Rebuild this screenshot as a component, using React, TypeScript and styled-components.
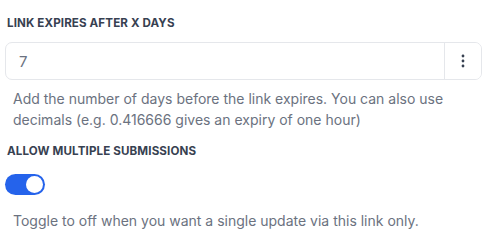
import React, { useState } from 'react'
import styled, { createGlobalStyle } from 'styled-components'

const GlobalStyle = createGlobalStyle`
    body {
        margin: 0;
        background: #ffffff;
        font-family: "Inter", "Noto Sans", sans-serif;
    }
`

const Panel = styled.div`
    width: 477px;
    padding: 15px 0 0 5px;
`

const Label = styled.h3`
    margin: 0 0 0 2px;
    font-size: 11.6px;
    line-height: 16px;
    font-weight: 700;
    letter-spacing: 0.01em;
    text-transform: uppercase;
    color: #374151;
`

const InputRow = styled.div`
    display: flex;
    height: 38px;
    margin-top: 11px;
    border: 1px solid #e5e7eb;
    border-radius: 7px;
    box-sizing: border-box;
    overflow: hidden;
`

const Input = styled.input`
    flex: 1;
    min-width: 0;
    border: none;
    outline: none;
    padding: 0 13px;
    font-family: "Inter", sans-serif;
    font-size: 15px;
    color: #6b7280;
    background: transparent;
`

const MenuButton = styled.button`
    width: 37px;
    display: flex;
    align-items: center;
    justify-content: center;
    border: none;
    border-left: 1px solid #e5e7eb;
    background: #ffffff;
    padding: 0;
    cursor: pointer;
`

const Help = styled.p<{ $top: number }>`
    margin: ${p => p.$top}px 0 0 8px;
    font-size: 14px;
    line-height: 21px;
    color: #6b7280;
`

const Switch = styled.button<{ $on: boolean }>`
    display: flex;
    align-items: center;
    justify-content: ${p => (p.$on ? 'flex-end' : 'flex-start')};
    width: 40px;
    height: 21px;
    margin-top: 15px;
    padding: 2px;
    box-sizing: border-box;
    border: none;
    border-radius: 11px;
    background: ${p => (p.$on ? '#2563eb' : '#d1d5db')};
    cursor: pointer;
`

const Knob = styled.span`
    width: 17px;
    height: 17px;
    border-radius: 50%;
    background: #ffffff;
`

const Section = styled.div<{ $top: number }>`
    margin-top: ${p => p.$top}px;
`

const Dots = () => (
    <svg width="4" height="14" viewBox="0 0 4 14">
        <circle cx="2" cy="2" r="1.4" fill="#374151" />
        <circle cx="2" cy="7" r="1.4" fill="#374151" />
        <circle cx="2" cy="12" r="1.4" fill="#374151" />
    </svg>
)

export default function App() {
    const [on, setOn] = useState(true)
    return (
        <>
            <GlobalStyle />
            <Panel>
                <Label>Link expires after X days</Label>
                <InputRow>
                    <Input defaultValue="7" />
                    <MenuButton aria-label="more">
                        <Dots />
                    </MenuButton>
                </InputRow>
                <Help $top={8}>
                    Add the number of days before the link expires. You can also use decimals (e.g. 0.416666 gives an
                    expiry of one hour)
                </Help>
                <Section $top={13}>
                    <Label>Allow multiple submissions</Label>
                    <Switch $on={on} onClick={() => setOn(!on)} aria-label="toggle">
                        <Knob />
                    </Switch>
                    <Help $top={15}>Toggle to off when you want a single update via this link only.</Help>
                </Section>
            </Panel>
        </>
    )
}
